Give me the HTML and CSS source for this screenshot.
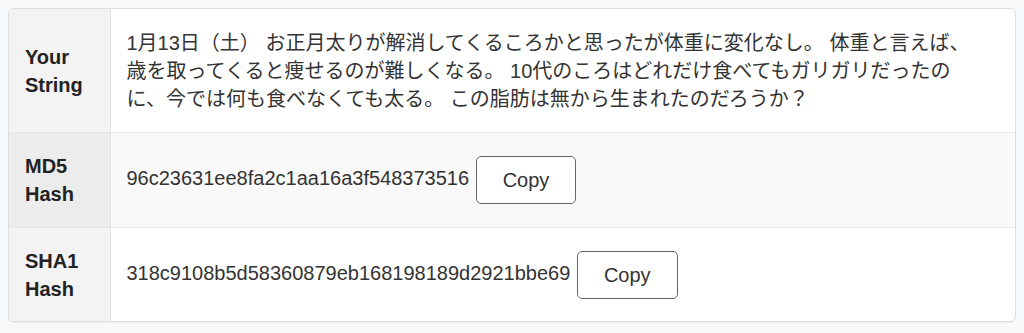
FILE: index.html
```html
<!DOCTYPE html>
<html lang="ja">
<head>
    <meta charset="UTF-8">
    <meta name="viewport" content="width=device-width, initial-scale=1.0">
    <title>Hash Generator</title>
    <link rel="stylesheet" href="styles.css">
</head>
<body>
    <div class="result-box">
        <table class="hash-table">
            <tr>
                <th>Your String</th>
                <td class="source">1月13日（土） お正月太りが解消してくるころかと思ったが体重に変化なし。 体重と言えば、歳を取ってくると痩せるのが難しくなる。 10代のころはどれだけ食べてもガリガリだったのに、今では何も食べなくても太る。 この脂肪は無から生まれたのだろうか？</td>
            </tr>
            <tr class="striped">
                <th>MD5 Hash</th>
                <td><span id="md5">96c23631ee8fa2c1aa16a3f548373516</span> <button class="copy-btn">Copy</button></td>
            </tr>
            <tr class="last">
                <th>SHA1 Hash</th>
                <td><span id="sha1">318c9108b5d58360879eb168198189d2921bbe69</span> <button class="copy-btn">Copy</button></td>
            </tr>
        </table>
    </div>
</body>
</html>
```

FILE: styles.css
```css
* {
    box-sizing: border-box;
}

body {
    margin: 0;
    padding: 8px;
    background-color: #f8f9fb;
    font-family: "Liberation Sans", Arial, "Noto Sans CJK JP", sans-serif;
    font-size: 20px;
    line-height: 28px;
    color: #333;
}

.result-box {
    background: white;
    border: 1px solid #dedede;
    border-radius: 6px;
    overflow: hidden;
    box-shadow: 0 1px 2px rgba(0, 0, 0, 0.06);
}

.hash-table {
    width: 100%;
    border-collapse: collapse;
}

.hash-table th,
.hash-table td {
    padding: 19px 16px;
    border-top: 1px solid #e6e6e6;
    vertical-align: middle;
    text-align: left;
}

.hash-table tr:first-child th,
.hash-table tr:first-child td {
    border-top: none;
}

.hash-table tr:first-child td {
    padding-top: 20px;
}

.hash-table .last th,
.hash-table .last td {
    padding-bottom: 18px;
}

.hash-table th {
    width: 101px;
    background: #f3f3f3;
    border-right: 1px solid #e3e3e3;
    color: #222;
    font-weight: bold;
}

.hash-table .source {
    padding-right: 42px;
}

.striped th {
    background: #ececec;
}

.striped td {
    background: #f9f9f9;
}

.copy-btn {
    margin-left: 1px;
    font-family: inherit;
    font-size: 20px;
    line-height: 28px;
    color: #333;
    background: white;
    border: 1px solid #666;
    border-radius: 5px;
    padding: 9px 26px;
    vertical-align: middle;
    cursor: pointer;
}
```
